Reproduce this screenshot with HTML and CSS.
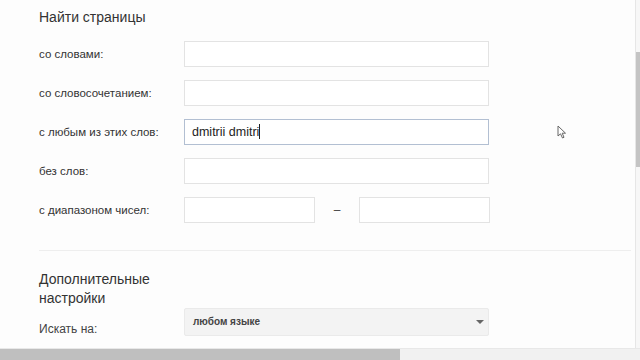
FILE: index.html
```html
<!DOCTYPE html>
<html lang="ru">
<head>
    <meta charset="UTF-8">
    <meta name="viewport" content="width=device-width, initial-scale=1.0">
    <link rel="stylesheet" href="styles.css">
</head>
<body>
    <div class="window">
        <div class="main">
            <div class="content">
                <h2 class="section-title">Найти страницы</h2>

                <div class="row">
                    <label class="row-label">со словами:</label>
                    <div class="field"></div>
                </div>
                <div class="row">
                    <label class="row-label">со словосочетанием:</label>
                    <div class="field"></div>
                </div>
                <div class="row">
                    <label class="row-label">с любым из этих слов:</label>
                    <div class="field focused">dmitrii dmitri<span class="caret"></span></div>
                </div>
                <div class="row">
                    <label class="row-label">без слов:</label>
                    <div class="field"></div>
                </div>
                <div class="row">
                    <label class="row-label">с диапазоном чисел:</label>
                    <div class="range">
                        <div class="field small"></div>
                        <span class="dash">–</span>
                        <div class="field small"></div>
                    </div>
                </div>

                <div class="divider"></div>

                <h2 class="section-title extra">Дополнительные<br>настройки</h2>
                <div class="row">
                    <label class="row-label big">Искать на:</label>
                    <div class="select">
                        <span>любом языке</span>
                        <span class="arrow"></span>
                    </div>
                </div>

                <svg class="cursor" width="10" height="14" viewBox="0 0 10 14">
                    <path d="M1 1 L1 11 L3.5 8.8 L5.5 13 L7 12.3 L5.2 8.2 L8.5 8.2 Z" fill="#fff" stroke="#666" stroke-width="1"/>
                </svg>
            </div>
            <div class="vscroll">
                <div class="vthumb"></div>
            </div>
        </div>
        <div class="hscroll">
            <div class="hthumb"></div>
        </div>
    </div>
</body>
</html>
```

FILE: styles.css
```css
body {
    margin: 0;
    font-family: "Liberation Sans", Arial, sans-serif;
    color: #222;
    background: #fff;
}
.window {
    width: 640px;
    height: 360px;
    display: flex;
    flex-direction: column;
    overflow: hidden;
}
.main {
    flex: 1;
    display: flex;
    min-height: 0;
}
.content {
    flex: 1;
    position: relative;
    padding-left: 39px;
    background: #fdfdfd;
}
.section-title {
    margin: 0;
    padding-top: 8px;
    font-size: 14px;
    font-weight: normal;
    line-height: 19px;
    color: #333;
    height: 33px;
}
.row {
    display: flex;
    align-items: center;
    height: 26px;
    margin-bottom: 13px;
}
.row-label {
    width: 145px;
    font-size: 11.5px;
    color: #333;
}
.row-label.big {
    font-size: 12px;
    color: #444;
}
.field {
    width: 295px;
    height: 24px;
    border: 1px solid #e3e3e3;
    background: #fff;
    font-size: 12.5px;
    line-height: 24px;
    padding-left: 8px;
    box-sizing: content-box;
    color: #222;
}
.field.focused {
    border-color: #b2bfd2;
    width: 296px;
    padding-left: 7px;
}
.caret {
    display: inline-block;
    width: 1px;
    height: 15px;
    background: #222;
    vertical-align: -3px;
}
.range {
    display: flex;
    align-items: center;
}
.field.small {
    width: 121px;
    padding-left: 8px;
}
.dash {
    width: 44px;
    text-align: center;
    font-size: 12px;
    color: #444;
}
.divider {
    height: 1px;
    background: #eeeeee;
    width: 592px;
    margin-top: 27px;
    margin-bottom: 19px;
}
.section-title.extra {
    padding-top: 0;
    height: 46px;
    line-height: 19px;
}
.select {
    width: 295px;
    height: 26px;
    display: flex;
    align-items: center;
    justify-content: space-between;
    padding-left: 8px;
    background: #f3f3f3;
    border: 1px solid #eaeaea;
    border-radius: 2px;
    font-size: 10px;
    font-weight: bold;
    color: #444;
    margin-top: -15px;
}
.arrow {
    width: 0;
    height: 0;
    border-left: 4px solid transparent;
    border-right: 4px solid transparent;
    border-top: 4px solid #666;
    margin-right: 4px;
}
.cursor {
    position: absolute;
    left: 557px;
    top: 125px;
}
.vscroll {
    width: 4px;
    border-left: 1px solid #e6e6e6;
    background: #f7f7f7;
}
.vthumb {
    margin-top: 52px;
    height: 115px;
    background: #c4c4c4;
}
.hscroll {
    height: 11px;
    border-top: 1px solid #e8e8e8;
    background: #f1f1f1;
}
.hthumb {
    width: 400px;
    height: 11px;
    background: #bfbfbf;
}
```
